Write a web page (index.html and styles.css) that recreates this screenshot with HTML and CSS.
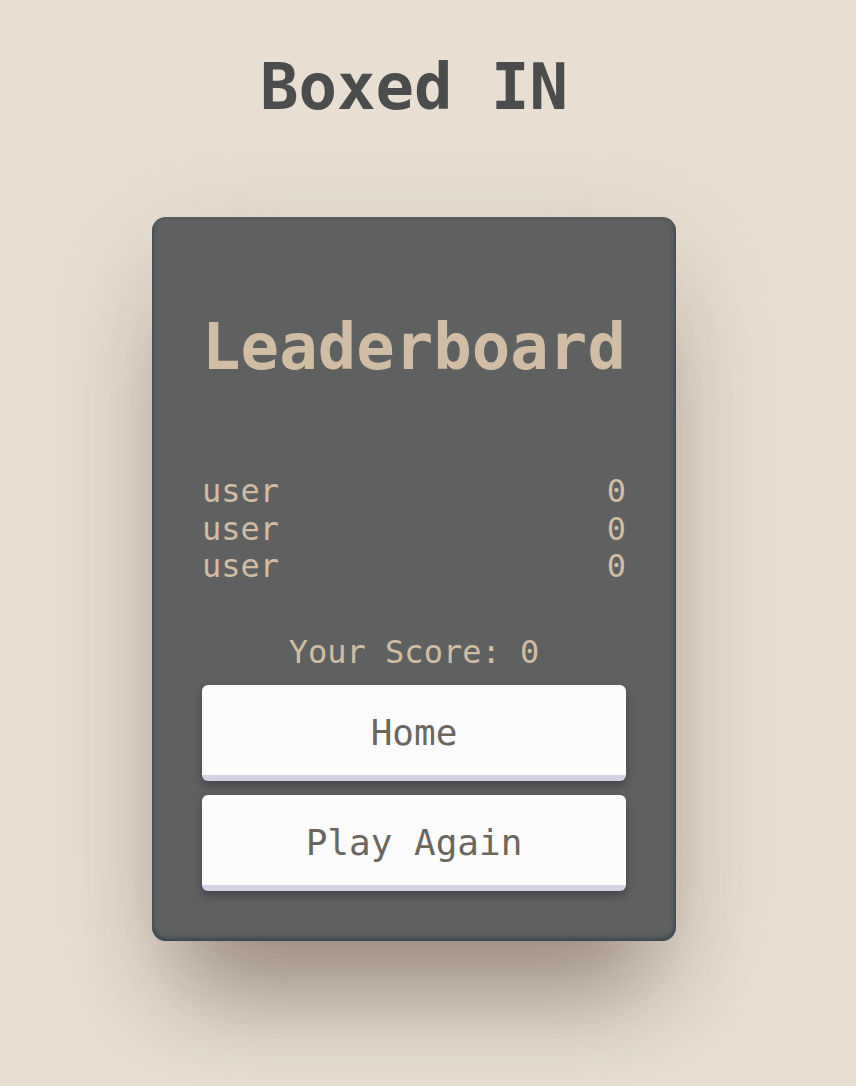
FILE: index.html
```html
<!DOCTYPE html>
<html>
<head>
<meta charset="utf-8">
<link rel="stylesheet" href="styles.css">
</head>
<body>
<h1 class="title">Boxed IN</h1>
<main class="card">
  <h2 class="card-title">Leaderboard</h2>
  <ul class="scores">
    <li class="score-row"><span>user</span><span>0</span></li>
    <li class="score-row"><span>user</span><span>0</span></li>
    <li class="score-row"><span>user</span><span>0</span></li>
  </ul>
  <p class="your-score">Your Score: 0</p>
  <button class="btn">Home</button>
  <button class="btn">Play Again</button>
</main>
</body>
</html>
```
FILE: styles.css
```css
html, body {
  margin: 0;
  padding: 0;
}
body {
  background: #e8dfd2;
  font-family: "DejaVu Sans Mono", monospace;
  min-height: 1086px;
  padding-right: 28px;
  box-sizing: border-box;
  display: flex;
  flex-direction: column;
  align-items: center;
}
.title {
  margin: 50px 0 0;
  font-size: 64px;
  font-weight: bold;
  color: #4a4d4c;
  line-height: 75px;
}
.card {
  margin-top: 92px;
  width: 424px;
  padding: 50px;
  background: #5f6160;
  border-radius: 14px;
  box-shadow:
    0 80px 90px -30px rgba(70, 50, 40, 0.42),
    0 30px 120px rgba(90, 65, 45, 0.16),
    inset 0 -3px 5px rgba(30, 50, 70, 0.55),
    inset 3px 0 5px -3px rgba(30, 50, 70, 0.35),
    inset -3px 0 5px -3px rgba(30, 50, 70, 0.35);
  display: flex;
  flex-direction: column;
}
.card-title {
  margin: 43px 0 88px;
  font-size: 64px;
  font-weight: bold;
  color: #d1bda4;
  text-align: center;
  line-height: 75px;
}
.scores {
  list-style: none;
  margin: 0;
  padding: 0;
}
.score-row {
  display: flex;
  justify-content: space-between;
  font-size: 32px;
  color: #d1bda4;
  line-height: 37.5px;
}
.your-score {
  margin: 48px 0 14px;
  font-size: 32px;
  color: #d1bda4;
  text-align: center;
  line-height: 37.5px;
}
.btn {
  font-family: "DejaVu Sans Mono", monospace;
  font-size: 36px;
  color: #6b665f;
  background: #fcfcfd;
  border: none;
  border-bottom: 6px solid #d4d1e2;
  border-radius: 6px;
  height: 96px;
  padding: 4px 0 0;
  box-shadow: 0 5px 8px rgba(20, 15, 40, 0.35);
  margin-bottom: 14px;
}
.btn:last-child {
  margin-bottom: 0;
}
```
